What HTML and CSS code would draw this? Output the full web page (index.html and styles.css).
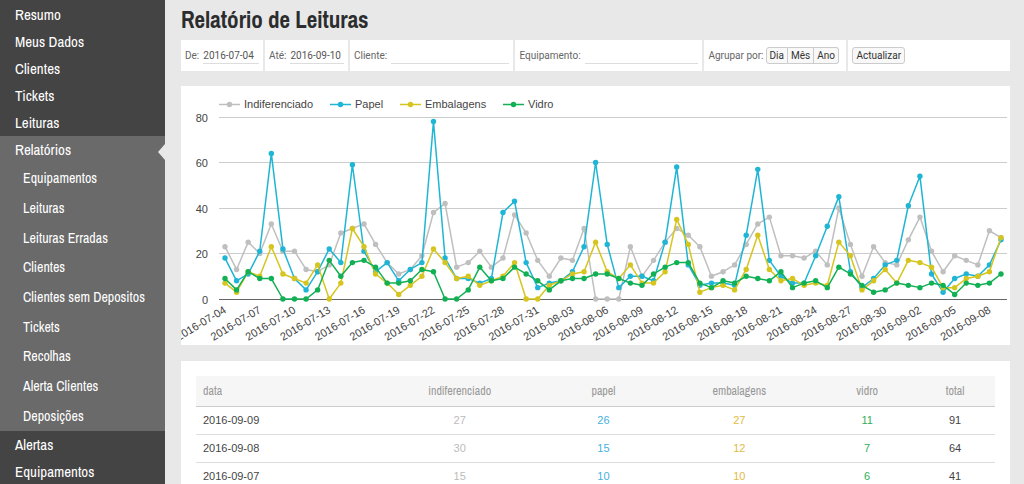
FILE: index.html
```html
<!DOCTYPE html>
<html lang="pt">
<head>
<meta charset="utf-8">
<title>Relatório de Leituras</title>
<link rel="stylesheet" href="styles.css">
</head>
<body>
<div class="layout">
  <nav class="sidebar">
    <ul class="menu">
      <li><a href="#">Resumo</a></li>
      <li><a href="#">Meus Dados</a></li>
      <li><a href="#">Clientes</a></li>
      <li><a href="#">Tickets</a></li>
      <li><a href="#">Leituras</a></li>
      <li class="active">
        <a href="#">Relatórios</a>
        <ul class="submenu">
          <li><a href="#">Equipamentos</a></li>
          <li><a href="#">Leituras</a></li>
          <li><a href="#">Leituras Erradas</a></li>
          <li><a href="#">Clientes</a></li>
          <li><a href="#">Clientes sem Depositos</a></li>
          <li><a href="#">Tickets</a></li>
          <li><a href="#">Recolhas</a></li>
          <li><a href="#">Alerta Clientes</a></li>
          <li><a href="#">Deposições</a></li>
        </ul>
      </li>
      <li><a href="#">Alertas</a></li>
      <li><a href="#">Equipamentos</a></li>
    </ul>
  </nav>
  <main class="content">
    <h1>Relatório de Leituras</h1>
    <form class="filters">
      <div class="field date"><label for="de">De:</label><input id="de" type="text" value="2016-07-04"></div>
      <div class="field date-to"><label for="ate">Até:</label><input id="ate" type="text" value="2016-09-10"></div>
      <div class="field client"><label for="cliente">Cliente:</label><input id="cliente" type="text"></div>
      <div class="field equipment"><label for="equip">Equipamento:</label><input id="equip" type="text"></div>
      <div class="field grouping"><span>Agrupar por:</span>
        <div class="button-group"><button type="button">Dia</button><button type="button">Mês</button><button type="button">Ano</button></div>
      </div>
      <div class="field submit"><button type="button">Actualizar</button></div>
    </form>
    <section class="panel chart-panel">
      <svg id="chart" class="chart" viewBox="0 0 829 259" role="img" aria-label="Leituras por dia"></svg>
    </section>
    <section class="panel table-panel">
      <table>
        <colgroup><col class="c-data"><col class="c-ind"><col class="c-pap"><col class="c-emb"><col class="c-vid"><col class="c-tot"></colgroup>
        <thead><tr><th>data</th><th>indiferenciado</th><th>papel</th><th>embalagens</th><th>vidro</th><th>total</th></tr></thead>
        <tbody>
          <tr><td>2016-09-09</td><td class="ind">27</td><td class="pap">26</td><td class="emb">27</td><td class="vid">11</td><td>91</td></tr>
          <tr><td>2016-09-08</td><td class="ind">30</td><td class="pap">15</td><td class="emb">12</td><td class="vid">7</td><td>64</td></tr>
          <tr><td>2016-09-07</td><td class="ind">15</td><td class="pap">10</td><td class="emb">10</td><td class="vid">6</td><td>41</td></tr>
        </tbody>
      </table>
    </section>
  </main>
</div>
<script src="chart.js"></script>
</body>
</html>
```
FILE: styles.css
```css
* { box-sizing: border-box; }
html, body { height: 100%; }
body {
  margin: 0;
  overflow: hidden;
  background: #e8e8e8;
  color: #444;
  font-family: "Liberation Sans", Arial, sans-serif;
  font-size: 11px;
}
.layout { display: flex; height: 100%; }
.sidebar {
  flex: 0 0 165px;
  padding-top: 1px;
  background: #444;
  overflow: hidden;
  font-family: "Archivo Narrow", "Liberation Sans Narrow", "Arial Narrow", sans-serif;
}
.menu, .submenu { margin: 0; padding: 0; list-style: none; }
.menu a {
  display: block;
  padding-left: 15px;
  color: #fff;
  font-size: 15px;
  line-height: 27px;
  text-decoration: none;
  white-space: nowrap;
}
.active { position: relative; background: #6a6a6a; }
.active::after {
  content: "";
  position: absolute;
  top: 8px;
  right: 0;
  border: solid transparent;
  border-width: 8px 7px 8px 0;
  border-right-color: #e8e8e8;
}
.submenu { display: grid; grid-auto-rows: 1fr; height: 268px; padding-top: 1px; align-items: center; }
.menu .submenu a { padding-left: 23px; font-size: 14px; }
.content { flex: 1; min-width: 0; padding: 0 14px 0 16px; overflow: hidden; }
h1 {
  margin: 0;
  color: #2b2d2e;
  font-family: "Archivo Narrow", "Liberation Sans Narrow", "Arial Narrow", sans-serif;
  font-size: 23px;
  line-height: 40px;
}
.filters {
  display: flex;
  height: 31px;
  margin-bottom: 15px;
  background: #fff;
  color: #666;
  font-family: Roboto, "Liberation Sans", sans-serif;
  font-size: 10px;
}
.field {
  display: flex;
  align-items: center;
  gap: 4px;
  min-width: 0;
  padding: 0 4px;
  border-right: 2px solid #e8e8e8;
  white-space: nowrap;
}
.date { flex: 0 0 84px; }
.date-to { flex: 0 0 85px; }
.client { flex: 165 1 0; }
.equipment { flex: 190 1 0; }
.grouping { flex: 0 0 144px; gap: 2px; }
.submit { flex: 163 1 0; border-right: 0; }
.field input {
  flex: 1;
  min-width: 0;
  height: 16px;
  padding: 0;
  border: 0;
  border-bottom: 1px solid #ddd;
  background: none;
  color: #555;
  font: inherit;
}
.button-group { display: flex; }
button {
  height: 17px;
  padding: 0 3px;
  border: 1px solid #ccc;
  border-radius: 3px;
  background: #f8f8f8;
  color: #333;
  font: inherit;
  line-height: 15px;
}
.button-group button { border-radius: 0; }
.button-group button + button { border-left: 0; }
.button-group button:first-child { border-radius: 3px 0 0 3px; }
.button-group button:last-child { border-radius: 0 3px 3px 0; }
.panel { background: #fff; }
.chart-panel { margin-bottom: 16px; }
.chart { display: block; width: 100%; height: auto; }
.chart text { font-size: 11px; fill: #444; }
.chart .grid { stroke: #ccc; }
.chart .axis { stroke: #666; }
.chart .line { fill: none; stroke-width: 1.5; stroke-linejoin: round; }
.chart .end { text-anchor: end; }
.table-panel { padding: 15px; }
table { width: 100%; border-collapse: collapse; table-layout: fixed; }
.c-data { width: 22%; }
.c-ind { width: 22%; }
.c-pap { width: 14%; }
.c-emb { width: 20%; }
.c-vid { width: 12%; }
.c-tot { width: 10%; }
th {
  height: 30px;
  padding: 0;
  border-bottom: 1px solid #ccc;
  background: #f6f6f6;
  color: #999;
  font-family: "Archivo Narrow", "Liberation Sans Narrow", "Arial Narrow", sans-serif;
  font-size: 12px;
  font-weight: normal;
}
td { height: 28px; padding: 0; border-bottom: 1px solid #ddd; text-align: center; }
th:first-child, td:first-child { padding-left: 7px; text-align: left; }
.ind { color: #bbb; }
.pap { color: #46b1dc; }
.emb { color: #e0bb42; }
.vid { color: #2fb05a; }
```
FILE: chart.js
```js
const series = [
  { name: "Indiferenciado", color: "#bfbfbf", legendX: 38, data: [23,13,25,20,33,21,21,13,12,15,29,31,33,24,16,11,13,19,38,42,14,16,21,14,18,37,29,17,10,18,17,31,0,0,0,23,10,17,25,31,28,23,10,12,15,24,33,36,19,19,18,21,15,40,24,10,23,16,15,26,36,21,12,19,17,15,30,27] },
  { name: "Papel", color: "#1fb5d5", legendX: 149, data: [18,8,11,21,64,22,9,4,12,22,16,59,21,12,16,8,13,16,78,18,9,9,7,9,38,43,16,5,7,8,12,23,60,24,5,10,10,8,25,58,15,6,7,7,6,28,57,17,10,7,7,19,32,45,12,5,9,15,17,41,54,11,3,9,11,10,15,26] },
  { name: "Embalagens", color: "#d6c51e", legendX: 219, data: [7,3,12,10,23,11,9,7,15,0,7,31,23,11,7,2,6,10,22,16,9,10,6,8,10,16,0,0,6,8,11,12,25,12,9,15,7,7,12,35,24,3,5,6,4,13,28,13,8,9,6,7,6,25,19,4,8,13,7,17,16,14,5,5,9,10,12,27] },
  { name: "Vidro", color: "#12b055", legendX: 322, data: [9,4,12,9,9,0,0,0,4,17,10,16,17,14,7,7,8,13,12,0,0,4,14,8,9,14,11,8,4,8,9,9,11,11,9,7,6,11,14,16,16,7,5,8,7,10,9,8,12,5,7,8,5,14,11,6,3,4,7,6,5,7,6,2,7,6,7,11] }
];
const svg = document.getElementById("chart");
const baseline = 213;
const x = i => 44 + i * (776 / 67);
const y = v => baseline - v * (182 / 80);

function add(tag, attrs, text) {
  const el = document.createElementNS("http://www.w3.org/2000/svg", tag);
  for (const key in attrs) el.setAttribute(key, attrs[key]);
  if (text !== undefined) el.textContent = text;
  svg.appendChild(el);
}

for (let v = 0; v <= 80; v += 20) {
  const ly = Math.floor(y(v)) + 0.5;
  add("line", { x1: 38, x2: 826, y1: ly, y2: ly, class: v ? "grid" : "axis" });
  add("text", { x: 27, y: ly + 4, class: "end" }, v);
}
for (const s of series) {
  add("polyline", { points: s.data.map((v, i) => x(i) + "," + y(v)).join(" "), class: "line", stroke: s.color });
  s.data.forEach((v, i) => add("circle", { cx: x(i), cy: y(v), r: 2.7, fill: s.color }));
  add("line", { x1: s.legendX, x2: s.legendX + 21, y1: 18.5, y2: 18.5, stroke: s.color, "stroke-width": 1.5 });
  add("circle", { cx: s.legendX + 10.5, cy: 18.5, r: 2.7, fill: s.color });
  add("text", { x: s.legendX + 25, y: 22 }, s.name);
}
for (let i = 0; i < 68; i += 3) {
  const day = new Date(Date.UTC(2016, 6, 4 + i)).toISOString().slice(0, 10);
  add("text", { transform: `translate(${x(i) + 2} 226) rotate(-31)`, class: "end" }, day);
}
```
